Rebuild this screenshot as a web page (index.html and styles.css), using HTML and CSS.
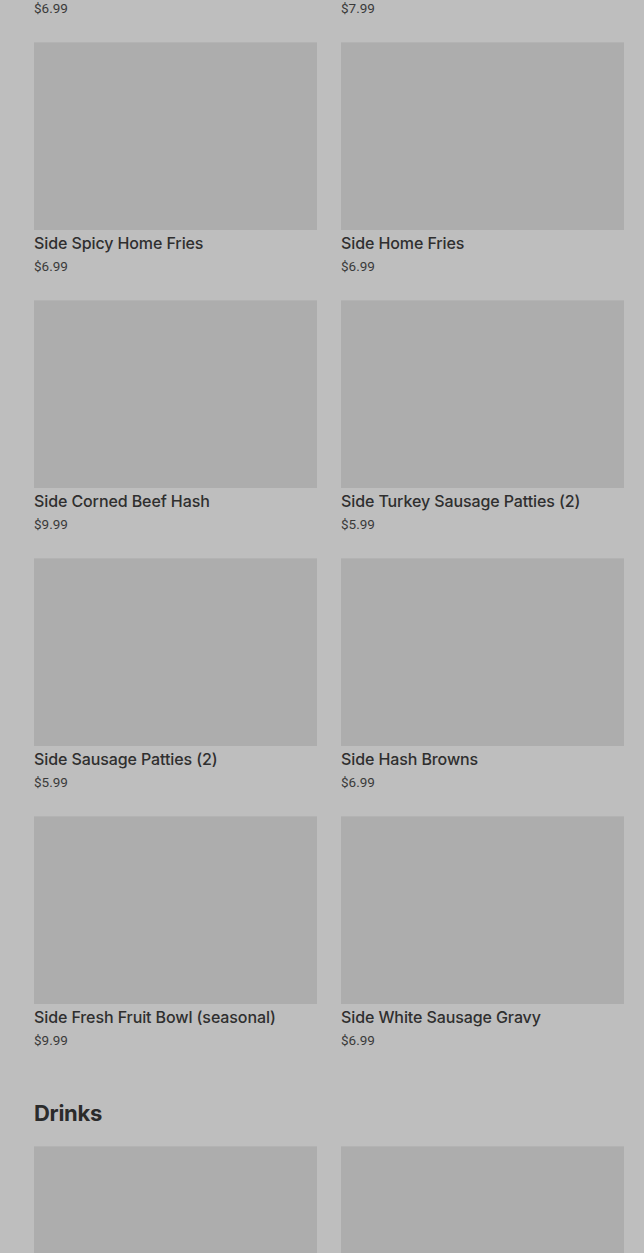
FILE: index.html
```
<!DOCTYPE html>
<html lang="en">
<head>
    <meta charset="UTF-8">
    <meta name="viewport" content="width=device-width, initial-scale=1.0">
    <title>Menu</title>
    <link rel="stylesheet" href="styles.css">
</head>
<body>

<main class="menu">
    <section class="menu-section sides">
        <div class="item-grid">
            <a href="#" class="item-card">
                <div class="item-image"></div>
                <h3>Side Bacon</h3>
                <p>$6.99</p>
            </a>
            <a href="#" class="item-card">
                <div class="item-image"></div>
                <h3>Side Smoked Sausage</h3>
                <p>$7.99</p>
            </a>
            <a href="#" class="item-card">
                <div class="item-image"></div>
                <h3>Side Spicy Home Fries</h3>
                <p>$6.99</p>
            </a>
            <a href="#" class="item-card">
                <div class="item-image"></div>
                <h3>Side Home Fries</h3>
                <p>$6.99</p>
            </a>
            <a href="#" class="item-card">
                <div class="item-image"></div>
                <h3>Side Corned Beef Hash</h3>
                <p>$9.99</p>
            </a>
            <a href="#" class="item-card">
                <div class="item-image"></div>
                <h3>Side Turkey Sausage Patties (2)</h3>
                <p>$5.99</p>
            </a>
            <a href="#" class="item-card">
                <div class="item-image"></div>
                <h3>Side Sausage Patties (2)</h3>
                <p>$5.99</p>
            </a>
            <a href="#" class="item-card">
                <div class="item-image"></div>
                <h3>Side Hash Browns</h3>
                <p>$6.99</p>
            </a>
            <a href="#" class="item-card">
                <div class="item-image"></div>
                <h3>Side Fresh Fruit Bowl (seasonal)</h3>
                <p>$9.99</p>
            </a>
            <a href="#" class="item-card">
                <div class="item-image"></div>
                <h3>Side White Sausage Gravy</h3>
                <p>$6.99</p>
            </a>
        </div>
    </section>

    <section class="menu-section">
        <h2>Drinks</h2>
        <div class="item-grid">
            <a href="#" class="item-card">
                <div class="item-image"></div>
                <h3>Coffee</h3>
                <p>$3.49</p>
            </a>
            <a href="#" class="item-card">
                <div class="item-image"></div>
                <h3>Orange Juice</h3>
                <p>$4.99</p>
            </a>
        </div>
    </section>
</main>

</body>
</html>
```

FILE: styles.css
```
body {
    font-family: 'Inter', 'Liberation Sans', sans-serif;
    margin: 0;
    padding: 0;
    background-color: #bebebe;
    color: #2f2f2f;
    overflow: hidden;
}

.menu {
    padding: 0 20px 0 34px;
}

/* page is scrolled: first row sits above the window */
.sides {
    margin-top: -216px;
}

.menu-section h2 {
    font-size: 22px;
    font-weight: 700;
    letter-spacing: -0.3px;
    line-height: 32px;
    margin: 47px 0 17px;
    color: #2b2b2b;
}

.item-grid {
    display: grid;
    grid-template-columns: repeat(2, 1fr);
    gap: 24px;
}

.item-card {
    display: block;
    text-decoration: none;
    color: inherit;
}

.item-image {
    height: 188px;
    background: #adadad;
    border-top: 1px solid #b3b3b3;
    box-sizing: border-box;
}

.item-card h3 {
    margin: 2px 0 0;
    font-size: 16px;
    font-weight: 500;
    letter-spacing: -0.1px;
    line-height: 22px;
    color: #2f2f2f;
}

.item-card p {
    margin: 2px 0 0;
    font-family: 'Roboto', 'Liberation Sans', sans-serif;
    font-size: 13.5px;
    line-height: 20px;
    color: #3a3a3a;
}
```
